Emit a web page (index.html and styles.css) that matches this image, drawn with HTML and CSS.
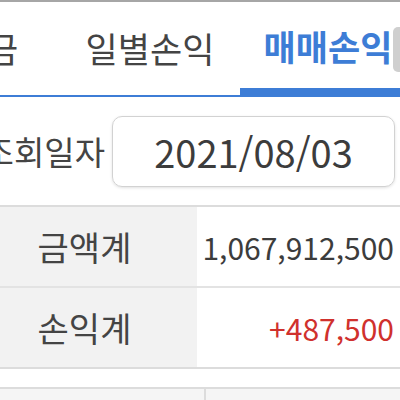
FILE: index.html
```html
<!DOCTYPE html>
<html lang="ko">
<head>
    <meta charset="UTF-8">
    <meta name="viewport" content="width=device-width, initial-scale=1.0">
    <title>매매손익</title>
    <link rel="stylesheet" href="styles.css">
</head>
<body>
    <div class="tab-bar">
        <div class="tab-track">
            <div class="tab">예수금</div>
            <div class="tab">일별손익</div>
            <div class="tab active">매매손익</div>
        </div>
        <div class="scroll-hint"></div>
    </div>

    <div class="query-row">
        <div class="query-label">조회일자</div>
        <div class="date-box">2021/08/03</div>
    </div>

    <table class="summary">
        <tr>
            <th>금액계</th>
            <td>1,067,912,500</td>
        </tr>
        <tr>
            <th>손익계</th>
            <td class="profit">+487,500</td>
        </tr>
    </table>

    <div class="detail-head">
        <div class="detail-cell"></div>
        <div class="detail-cell"></div>
    </div>
</body>
</html>
```

FILE: styles.css
```css
* {
    margin: 0;
    padding: 0;
    box-sizing: border-box;
    font-family: 'Noto Sans CJK KR', 'Noto Sans', sans-serif;
}

body {
    background-color: #FFFFFF;
    width: 400px;
    height: 400px;
    overflow: hidden;
    border-top: 2px solid #A6A6A6;
    color: #3C3C3C;
}

.tab-bar {
    position: relative;
    height: 95px;
    border-bottom: 2px solid #3D7DD6;
    overflow: hidden;
}

.tab-track {
    display: flex;
    height: 100%;
    margin-left: -120px;
}

.tab {
    flex: 0 0 180px;
    display: flex;
    justify-content: center;
    align-items: center;
    font-size: 35px;
    color: #444444;
    padding-bottom: 2px;
}

.tab.active {
    flex-basis: 176px;
    color: #3D7DD6;
    font-weight: 700;
    border-bottom: 7px solid #3D7DD6;
    padding-bottom: 0;
}

.scroll-hint {
    position: absolute;
    top: 25px;
    right: -6px;
    width: 13px;
    height: 45px;
    border-radius: 5px;
    background-color: rgba(195, 195, 195, 0.8);
}

.query-row {
    display: flex;
    align-items: center;
    height: 108px;
    padding-right: 5px;
    gap: 7px;
}

.query-label {
    flex: 0 0 105px;
    min-width: 0;
    display: flex;
    justify-content: flex-end;
    white-space: nowrap;
    font-size: 33px;
    color: #444444;
}

.date-box {
    flex: 1;
    height: 71px;
    display: flex;
    justify-content: center;
    align-items: center;
    border: 1px solid #D2D2D2;
    border-radius: 10px;
    box-shadow: 0 1px 3px rgba(0, 0, 0, 0.12);
    font-size: 38px;
    color: #3C3C3C;
}

.summary {
    width: 100%;
    border-collapse: collapse;
    border-top: 2px solid #DCDCDC;
    border-bottom: 2px solid #DCDCDC;
}

.summary tr + tr {
    border-top: 2px solid #E3E3E3;
}

.summary th {
    width: 197px;
    height: 81px;
    padding-right: 28px;
    background-color: #F2F2F2;
    font-size: 34px;
    font-weight: 400;
    color: #444444;
    text-align: center;
}

.summary td {
    height: 81px;
    text-align: right;
    padding-right: 6px;
    font-size: 30px;
    color: #3C3C3C;
    white-space: nowrap;
}

.summary .profit {
    color: #D0312D;
}

.detail-head {
    display: flex;
    margin-top: 18px;
    height: 30px;
    border-top: 2px solid #DCDCDC;
}

.detail-cell {
    background-color: #F5F5F5;
}

.detail-cell:first-child {
    flex: 0 0 206px;
    border-right: 2px solid #DCDCDC;
}

.detail-cell:last-child {
    flex: 1;
}
```
